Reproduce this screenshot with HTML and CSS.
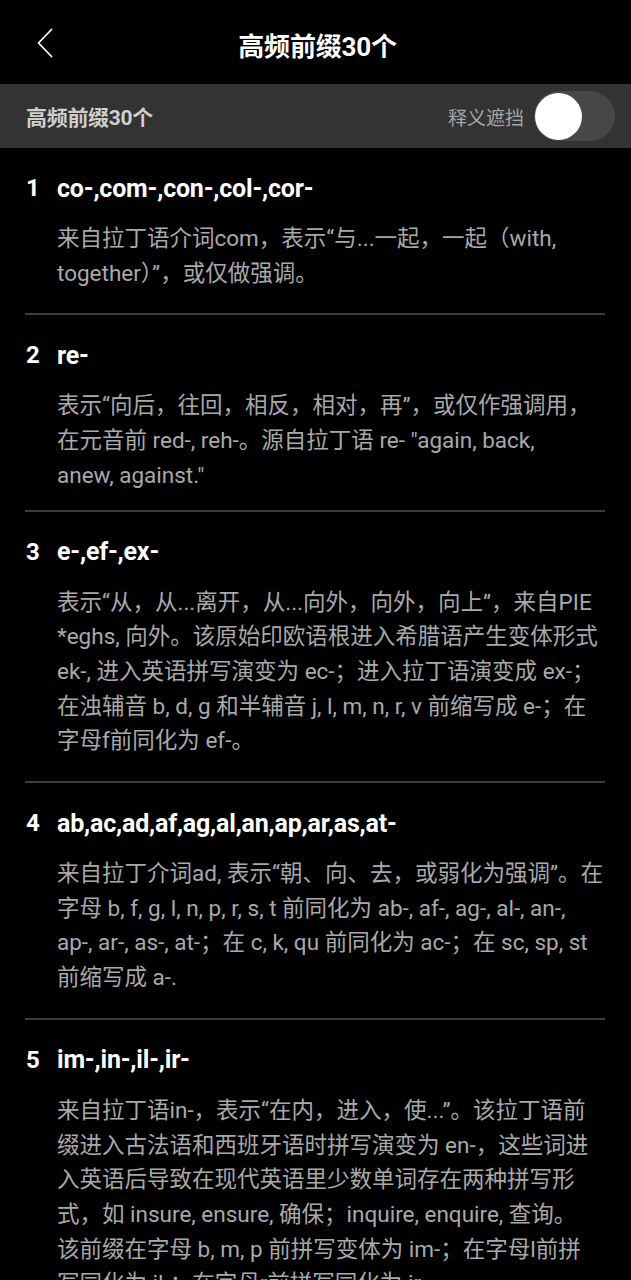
FILE: index.html
```html
<!DOCTYPE html>
<html lang="zh-CN">
<head>
<meta charset="utf-8">
<title>高频前缀30个</title>
<link rel="stylesheet" href="styles.css">
</head>
<body>
<header class="topbar">
  <button class="back" aria-label="返回">
    <svg width="20" height="32" viewBox="0 0 20 32"><path d="M15.5 2.5 L2.5 16 L15.5 29.5" fill="none" stroke="#fff" stroke-width="1.8" stroke-linecap="round" stroke-linejoin="round"/></svg>
  </button>
  <h1 class="title">高频前缀30个</h1>
  <span></span>
</header>
<div class="subbar">
  <span class="subbar-title">高频前缀30个</span>
  <div class="mask">
    <span class="mask-label">释义遮挡</span>
    <span class="switch"><span class="knob"></span></span>
  </div>
</div>
<main class="list">
  <section class="item">
    <div class="head"><span class="num">1</span><span class="prefix">co-,com-,con-,col-,cor-</span></div>
    <p class="desc">来自拉丁语介词com，表示“与...一起，一起（with, together）”，或仅做强调。</p>
  </section>
  <section class="item item--latin-end">
    <div class="head"><span class="num">2</span><span class="prefix">re-</span></div>
    <p class="desc">表示“向后，往回，相反，相对，再”，或仅作强调用，在元音前 red-, reh-。源自拉丁语 re- "again, back,<br>anew, against."</p>
  </section>
  <section class="item">
    <div class="head"><span class="num">3</span><span class="prefix">e-,ef-,ex-</span></div>
    <p class="desc">表示“从，从...离开，从...向外，向外，向上”，来自PIE *eghs, 向外。该原始印欧语根进入希腊语产生变体形式 ek-, 进入英语拼写演变为 ec-；进入拉丁语演变成 ex-；在浊辅音 b, d, g 和半辅音 j, l, m, n, r, v 前缩写成 e-；在字母f前同化为 ef-。</p>
  </section>
  <section class="item">
    <div class="head"><span class="num">4</span><span class="prefix">ab,ac,ad,af,ag,al,an,ap,ar,as,at-</span></div>
    <p class="desc">来自拉丁介词ad, 表示“朝、向、去，或弱化为强调”。在字母 b, f, g, l, n, p, r, s, t 前同化为 ab-, af-, ag-, al-, an-, ap-, ar-, as-, at-；在 c, k, qu 前同化为 ac-；在 sc, sp, st 前缩写成 a-.</p>
  </section>
  <section class="item">
    <div class="head"><span class="num">5</span><span class="prefix">im-,in-,il-,ir-</span></div>
    <p class="desc">来自拉丁语in-，表示“在内，进入，使...”。该拉丁语前缀进入古法语和西班牙语时拼写演变为 en-，这些词进入英语后导致在现代英语里少数单词存在两种拼写形式，如 insure, ensure, 确保；inquire, enquire, 查询。<br>该前缀在字母 b, m, p 前拼写变体为 im-；在字母l前拼<br>写同化为 il-；在字母r前拼写同化为 ir-。</p>
  </section>
</main>
</body>
</html>
```
FILE: styles.css
```css
* { box-sizing: border-box; }
html, body { margin: 0; padding: 0; }
body {
  background: #000;
  color: #fff;
  font-family: Roboto, "Noto Sans CJK SC", sans-serif;
}
.topbar {
  height: 84px;
  display: grid;
  grid-template-columns: 1fr auto 1fr;
  align-items: center;
  background: #000;
}
.back {
  justify-self: start;
  margin-left: 36px;
  background: none;
  border: 0;
  padding: 0;
  display: flex;
  margin-top: 2px;
}
.title {
  margin: 0 0 0 4px;
  font-size: 26px;
  font-weight: 700;
  color: #fff;
  letter-spacing: -0.2px;
  margin-top: 4px;
}
.subbar {
  height: 64px;
  background: #333333;
  display: flex;
  align-items: center;
  justify-content: space-between;
  padding: 0 16px 0 26px;
}
.subbar-title {
  font-size: 21px;
  font-weight: 700;
  color: #cfcfcf;
  letter-spacing: -0.3px;
}
.mask {
  display: flex;
  align-items: center;
  gap: 10px;
}
.mask-label {
  font-size: 19px;
  color: #a6a6a6;
}
.switch {
  width: 81px;
  height: 50px;
  border-radius: 25px;
  background: #474747;
  display: flex;
  align-items: center;
  padding-left: 1px;
}
.knob {
  width: 47px;
  height: 47px;
  border-radius: 50%;
  background: #fff;
}
.list {
  padding: 0 26px 0 25px;
}
.item {
  padding: 25px 0 23px;
  border-bottom: 2px solid #3c3c3c;
}
.item--latin-end { padding-bottom: 17px; }
.head {
  display: flex;
  align-items: center;
  height: 30px;
}
.num {
  width: 32px;
  padding-left: 1px;
  font-size: 24px;
  font-weight: 700;
  color: #fff;
}
.prefix {
  font-size: 25px;
  font-weight: 700;
  color: #fff;
  letter-spacing: -0.2px;
}
.desc {
  margin: 18px 0 0 32px;
  font-size: 22.5px;
  line-height: 34.7px;
  color: #a9a9a9;
}
```
